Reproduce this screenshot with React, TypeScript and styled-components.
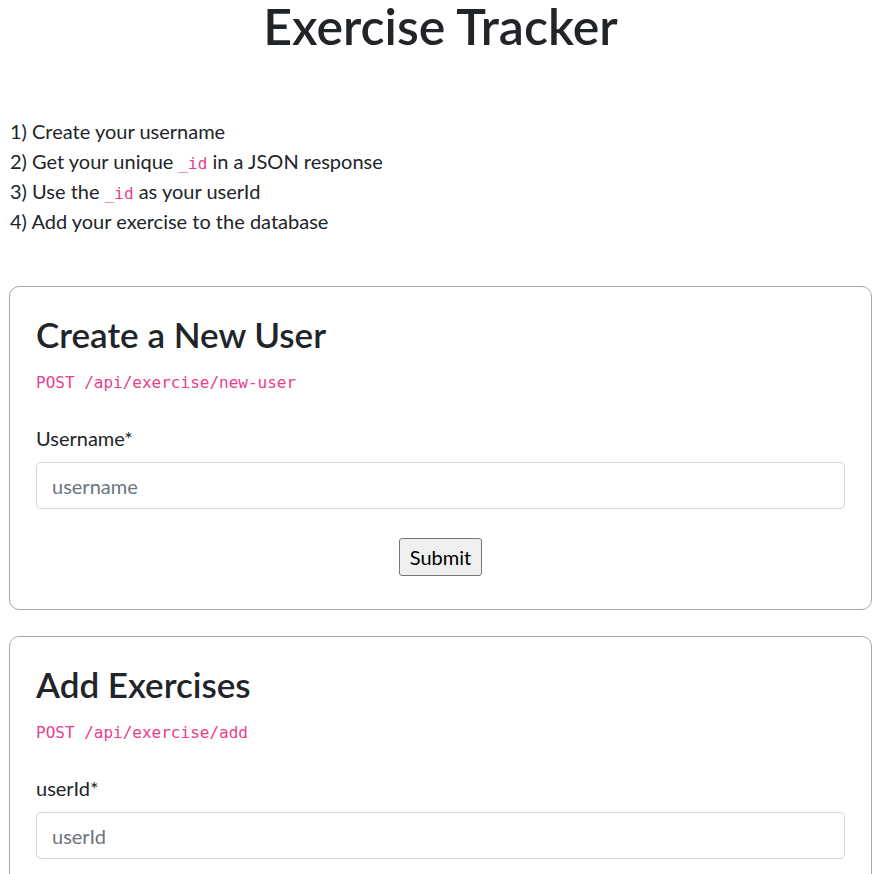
import React from "react";
import styled, { createGlobalStyle } from "styled-components";

const GlobalStyle = createGlobalStyle`
  html, body {
    margin: 0;
    padding: 0;
    background: #ffffff;
  }
  body {
    font-family: Lato, "Noto Sans", "Liberation Sans", sans-serif;
    font-size: 20px;
    line-height: 30px;
    color: #212529;
  }
  *, *::before, *::after { box-sizing: border-box; }
`;

const Page = styled.div`
  padding: 0 2px 0 9px;
`;

const Title = styled.h1`
  margin: 0 0 64px;
  font-size: 50px;
  line-height: 52px;
  font-weight: 600;
  text-align: center;
`;

const Instructions = styled.div`
  margin: 0 0 50px;
  padding-left: 1px;
`;

const Step = styled.div`
  height: 30px;
  line-height: 30px;
`;

const InlineCode = styled.code`
  font-family: "DejaVu Sans Mono", "Liberation Mono", monospace;
  font-size: 16px;
  line-height: 1;
  color: #e83e8c;
`;

const Card = styled.form`
  border: 1px solid #a9a9a9;
  border-radius: 10px;
  padding: 25px 26px 33px;
  margin-bottom: 26px;
`;

const CardTitle = styled.h2`
  margin: 0 0 12px;
  font-size: 35px;
  line-height: 44px;
  font-weight: 600;
`;

const Endpoint = styled.code`
  display: block;
  margin-bottom: 25px;
  font-family: "DejaVu Sans Mono", "Liberation Mono", monospace;
  font-size: 16px;
  line-height: 30px;
  color: #e83e8c;
`;

const Field = styled.div`
  margin-bottom: 29px;
`;

const Label = styled.label`
  display: block;
  margin-bottom: 9px;
  line-height: 30px;
`;

const Input = styled.input`
  display: block;
  width: 100%;
  height: 47px;
  padding: 0 15px;
  font-family: inherit;
  font-size: 20px;
  color: #495057;
  background: #fff;
  border: 1px solid #ced4da;
  border-radius: 5px;
  outline: none;
  &::placeholder {
    color: #6c757d;
    opacity: 1;
  }
`;

const Actions = styled.div`
  display: flex;
  justify-content: center;
`;

const Button = styled.button`
  height: 38px;
  padding: 0 10px;
  font-family: inherit;
  font-size: 20px;
  font-weight: 400;
  line-height: 30px;
  color: #000;
  background: #efefef;
  border: 1px solid #767676;
  border-radius: 3px;
`;

type FieldDef = { label: string; placeholder: string };

const FormCard = ({
  title,
  endpoint,
  fields,
}: {
  title: string;
  endpoint: string;
  fields: FieldDef[];
}) => (
  <Card onSubmit={(e) => e.preventDefault()}>
    <CardTitle>{title}</CardTitle>
    <Endpoint>{endpoint}</Endpoint>
    {fields.map((f) => (
      <Field key={f.label}>
        <Label>{f.label}</Label>
        <Input type="text" placeholder={f.placeholder} />
      </Field>
    ))}
    <Actions>
      <Button type="submit">Submit</Button>
    </Actions>
  </Card>
);

export default function App() {
  return (
    <>
      <GlobalStyle />
      <Page>
        <Title>Exercise Tracker</Title>
        <Instructions>
          <Step>1) Create your username</Step>
          <Step>
            2) Get your unique <InlineCode>_id</InlineCode> in a JSON response
          </Step>
          <Step>
            3) Use the <InlineCode>_id</InlineCode> as your userId
          </Step>
          <Step>4) Add your exercise to the database</Step>
        </Instructions>
        <FormCard
          title="Create a New User"
          endpoint="POST /api/exercise/new-user"
          fields={[{ label: "Username*", placeholder: "username" }]}
        />
        <FormCard
          title="Add Exercises"
          endpoint="POST /api/exercise/add"
          fields={[
            { label: "userId*", placeholder: "userId" },
            { label: "Description*", placeholder: "description" },
            { label: "Duration*", placeholder: "duration (mins.)" },
            { label: "Date", placeholder: "date (yyyy-mm-dd)" },
          ]}
        />
      </Page>
    </>
  );
}
